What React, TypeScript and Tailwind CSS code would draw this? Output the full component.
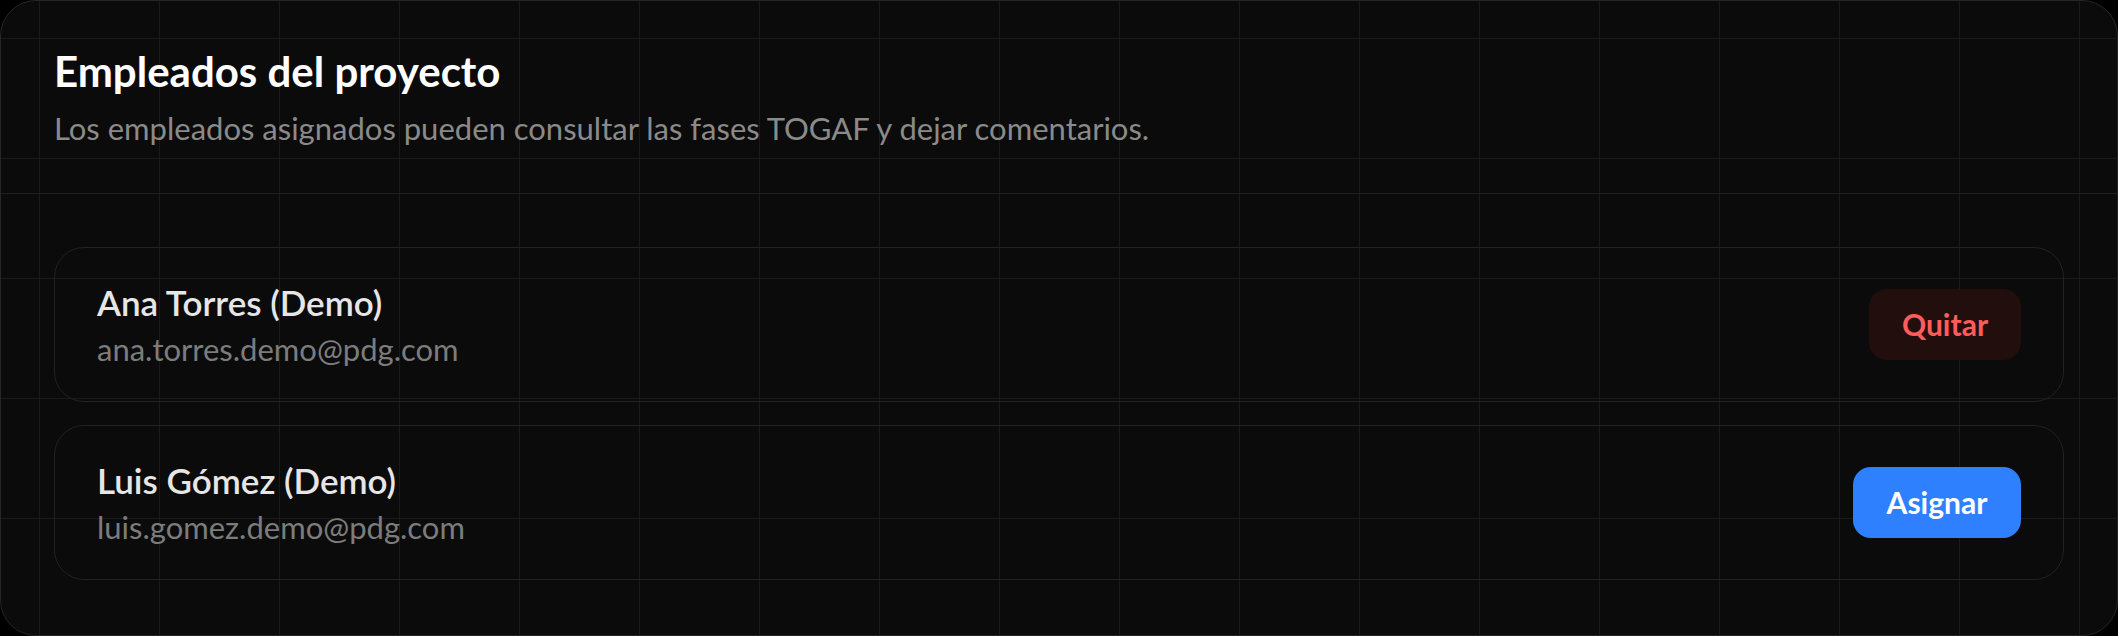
import { useState } from "react";

type Employee = {
  id: number;
  name: string;
  email: string;
  assigned: boolean;
};

const initialEmployees: Employee[] = [
  { id: 1, name: "Ana Torres (Demo)", email: "ana.torres.demo@pdg.com", assigned: true },
  { id: 2, name: "Luis Gómez (Demo)", email: "luis.gomez.demo@pdg.com", assigned: false },
];

const EmployeeRow = ({ employee, onToggle }: { employee: Employee; onToggle: () => void }) => (
  <div className="flex h-[155px] items-center justify-between rounded-[30px] border border-[#222222] px-[42px]">
    <div className="flex flex-col gap-[5px]">
      <span className="text-[35px] font-semibold leading-[44px] text-[#e6e6e6]">{employee.name}</span>
      <span className="text-[31px] leading-[40px] text-[#7c7c7c]">{employee.email}</span>
    </div>
    {employee.assigned ? (
      <button
        onClick={onToggle}
        className="flex h-[71px] w-[152px] items-center justify-center rounded-[18px] bg-[#230e0e] text-[30px] font-bold text-[#ff5c5c]"
      >
        Quitar
      </button>
    ) : (
      <button
        onClick={onToggle}
        className="flex h-[71px] w-[168px] items-center justify-center rounded-[18px] bg-[#2f80ff] text-[30px] font-bold text-white"
      >
        Asignar
      </button>
    )}
  </div>
);

const App = () => {
  const [employees, setEmployees] = useState(initialEmployees);

  const toggle = (id: number) =>
    setEmployees((list) => list.map((e) => (e.id === id ? { ...e, assigned: !e.assigned } : e)));

  return (
    <div className="min-h-screen bg-black font-['Lato','Noto_Sans',sans-serif]">
      <section className="h-[636px] w-[2118px] overflow-hidden rounded-[36px] border border-[#262626] bg-[#0b0b0b] bg-[linear-gradient(to_right,#1a1a1a_1px,transparent_1px),linear-gradient(to_bottom,#1a1a1a_1px,transparent_1px)] bg-[size:120px_120px] bg-[position:38px_37px]">
        {/* Header */}
        <header className="border-b border-[#1f1f1f] px-[53px] pt-[42px] pb-[45px]">
          <h2 className="text-[42px] font-bold leading-[56px] text-white">Empleados del proyecto</h2>
          <p className="mt-[9px] text-[31px] leading-[40px] text-[#8a8a8a]">
            Los empleados asignados pueden consultar las fases TOGAF y dejar comentarios.
          </p>
        </header>

        {/* Employee list */}
        <div className="flex flex-col gap-[23px] px-[53px] py-[53px]">
          {employees.map((employee) => (
            <EmployeeRow key={employee.id} employee={employee} onToggle={() => toggle(employee.id)} />
          ))}
        </div>
      </section>
    </div>
  );
};

export default App;
